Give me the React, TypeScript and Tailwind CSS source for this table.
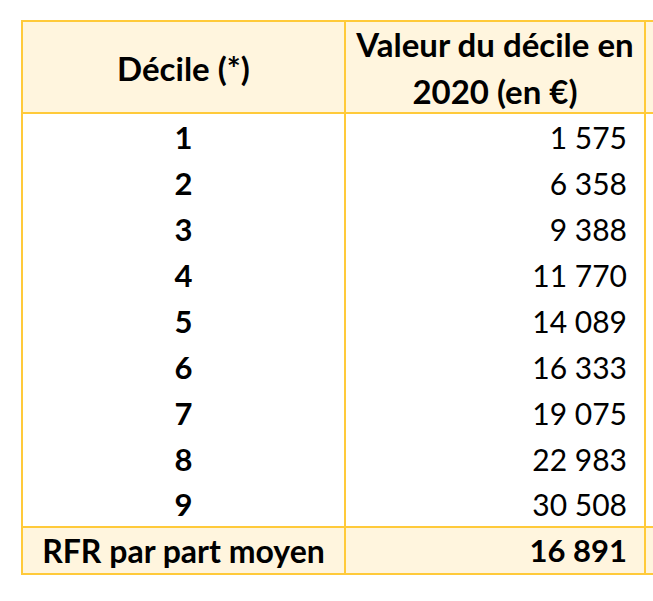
const rows: [string, string][] = [
  ["1", "1 575"],
  ["2", "6 358"],
  ["3", "9 388"],
  ["4", "11 770"],
  ["5", "14 089"],
  ["6", "16 333"],
  ["7", "19 075"],
  ["8", "22 983"],
  ["9", "30 508"],
];

export default function App() {
  return (
    <div
      className="w-[653px] h-[601px] overflow-hidden bg-white pt-[20px] pl-[21px] text-black"
      style={{ fontFamily: "Lato, 'Open Sans', sans-serif" }}
    >
      <div className="grid w-[663px] grid-cols-[323px_300px_40px] border-t-2 border-l-2 border-[#FFCA3A]">
        {/* En-tête */}
        <div className="h-[92px] flex items-center justify-center border-r-2 border-b-2 border-[#FFCA3A] bg-[#FFF5DE] font-bold text-[33px] pt-[4px]">
          Décile (*)
        </div>
        <div className="h-[92px] flex flex-col items-center justify-center border-r-2 border-b-2 border-[#FFCA3A] bg-[#FFF5DE] font-bold text-[33px] leading-[47px] pt-[2px]">
          <span>Valeur du décile en</span>
          <span>2020 (en €)</span>
        </div>
        <div className="h-[92px] border-b-2 border-[#FFCA3A] bg-[#FFF5DE]" />

        {/* Déciles */}
        {rows.map(([d, v], i) => {
          const last = i === rows.length - 1;
          return (
            <div key={d} className="contents">
              <div
                className={`h-[46px] flex items-center justify-center border-r-2 border-[#FFCA3A] font-bold text-[31px] ${
                  last ? "border-b-2" : ""
                }`}
              >
                {d}
              </div>
              <div
                className={`h-[46px] flex items-center justify-end pr-[17px] border-r-2 border-[#FFCA3A] text-[30px] ${
                  last ? "border-b-2" : ""
                }`}
              >
                {v}
              </div>
              <div className={`h-[46px] border-[#FFCA3A] ${last ? "border-b-2" : ""}`} />
            </div>
          );
        })}

        {/* Moyenne */}
        <div className="h-[47px] flex items-center justify-center border-r-2 border-b-2 border-[#FFCA3A] bg-[#FFF5DE] font-bold text-[32px]">
          RFR par part moyen
        </div>
        <div className="h-[47px] flex items-center justify-end pr-[17px] border-r-2 border-b-2 border-[#FFCA3A] bg-[#FFF5DE] font-bold text-[31px]">
          16 891
        </div>
        <div className="h-[47px] border-b-2 border-[#FFCA3A] bg-[#FFF5DE]" />
      </div>
    </div>
  );
}
